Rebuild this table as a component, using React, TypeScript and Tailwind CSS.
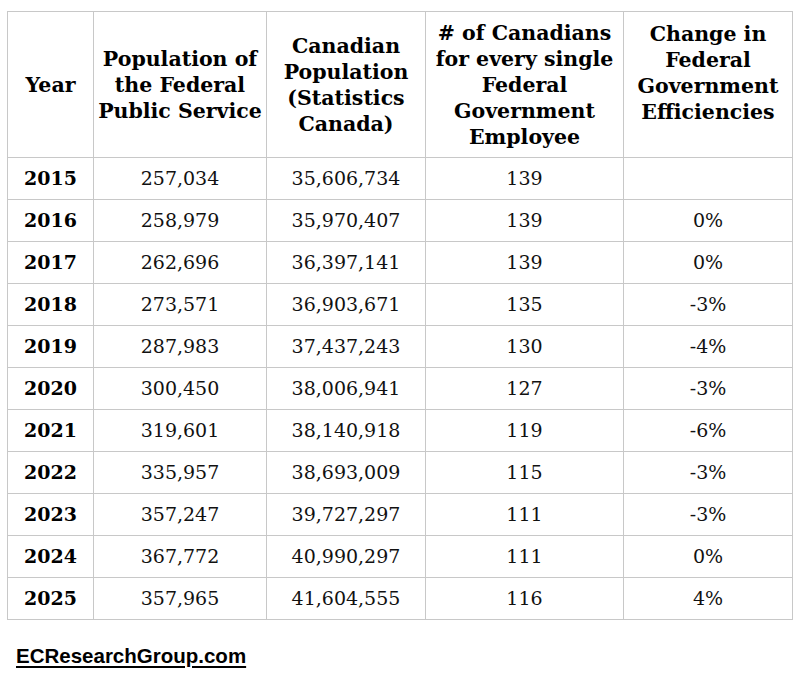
import React from "react";

interface Row {
  year: string;
  service: string;
  population: string;
  ratio: string;
  change: string;
}

const ROWS: Row[] = [
  { year: "2015", service: "257,034", population: "35,606,734", ratio: "139", change: "" },
  { year: "2016", service: "258,979", population: "35,970,407", ratio: "139", change: "0%" },
  { year: "2017", service: "262,696", population: "36,397,141", ratio: "139", change: "0%" },
  { year: "2018", service: "273,571", population: "36,903,671", ratio: "135", change: "-3%" },
  { year: "2019", service: "287,983", population: "37,437,243", ratio: "130", change: "-4%" },
  { year: "2020", service: "300,450", population: "38,006,941", ratio: "127", change: "-3%" },
  { year: "2021", service: "319,601", population: "38,140,918", ratio: "119", change: "-6%" },
  { year: "2022", service: "335,957", population: "38,693,009", ratio: "115", change: "-3%" },
  { year: "2023", service: "357,247", population: "39,727,297", ratio: "111", change: "-3%" },
  { year: "2024", service: "367,772", population: "40,990,297", ratio: "111", change: "0%" },
  { year: "2025", service: "357,965", population: "41,604,555", ratio: "116", change: "4%" },
];

const serif = "font-['DejaVu_Serif','Liberation_Serif',serif]";

export default function App() {
  return (
    <div className="w-[800px] h-[676px] bg-white overflow-hidden pt-[11px] pl-[7px]">
      <table className={`table-fixed border-collapse w-[785px] text-[#111] ${serif}`}>
        <colgroup>
          <col className="w-[86px]" />
          <col className="w-[173px]" />
          <col className="w-[159px]" />
          <col className="w-[198px]" />
          <col className="w-[169px]" />
        </colgroup>
        <thead>
          {/* header block */}
          <tr className="h-[146px] text-[20.5px] leading-[26px] font-bold text-black">
            <th className="border border-[#c8c8c8] align-middle whitespace-nowrap">Year</th>
            <th className="border border-[#c8c8c8] align-middle whitespace-nowrap">
              Population of
              <br />
              the Federal
              <br />
              Public Service
            </th>
            <th className="border border-[#c8c8c8] align-middle whitespace-nowrap">
              Canadian
              <br />
              Population
              <br />
              (Statistics
              <br />
              Canada)
            </th>
            <th className="border border-[#c8c8c8] align-middle whitespace-nowrap">
              # of Canadians
              <br />
              for every single
              <br />
              Federal
              <br />
              Government
              <br />
              Employee
            </th>
            <th className="border border-[#c8c8c8] align-top whitespace-nowrap pt-[9px]">
              Change in
              <br />
              Federal
              <br />
              Government
              <br />
              Efficiencies
            </th>
          </tr>
        </thead>
        <tbody className="text-[19px]">
          {ROWS.map((r) => (
            <tr key={r.year} className="h-[42px] text-center">
              <td className="border border-[#c8c8c8] font-bold text-black">{r.year}</td>
              <td className="border border-[#c8c8c8]">{r.service}</td>
              <td className="border border-[#c8c8c8]">{r.population}</td>
              <td className="border border-[#c8c8c8]">{r.ratio}</td>
              <td className="border border-[#c8c8c8]">{r.change}</td>
            </tr>
          ))}
        </tbody>
      </table>

      <div className="mt-[21px] ml-[9px]">
        <span className="font-['Liberation_Sans',Arial,sans-serif] font-bold text-[20.5px] text-black underline underline-offset-[3px] decoration-[1.5px]">
          ECResearchGroup.com
        </span>
      </div>
    </div>
  );
}
